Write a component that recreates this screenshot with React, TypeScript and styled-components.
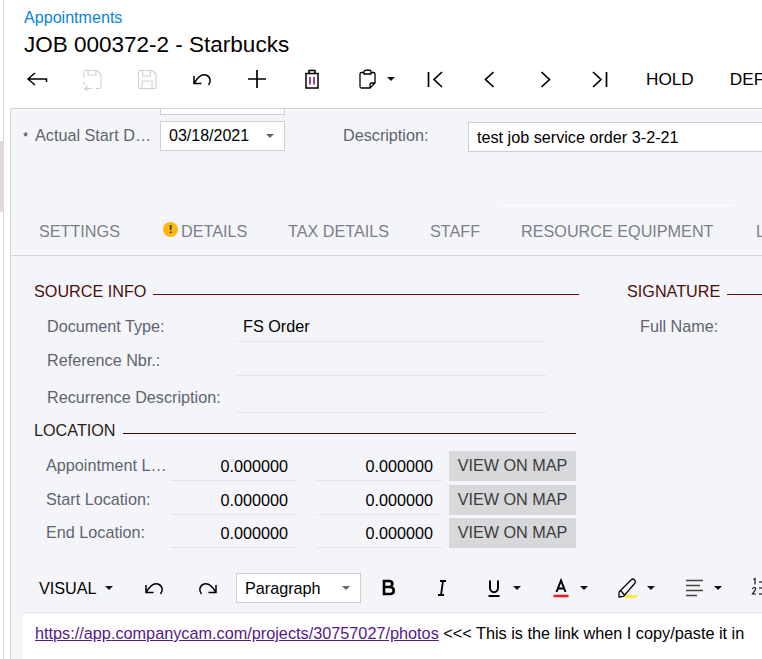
import React from 'react'
import styled, { createGlobalStyle } from 'styled-components'

const GlobalStyle = createGlobalStyle`
  html, body {
    margin: 0;
    padding: 0;
    background: #fff;
    overflow: hidden;
  }
  body {
    font-family: 'Liberation Sans', Arial, sans-serif;
    font-size: 16.2px;
    color: #000;
  }
`

const Page = styled.div`
  display: flex;
  width: 762px;
  height: 659px;
  overflow: hidden;
`
const Rail = styled.div`
  flex: 0 0 3px;
  border-right: 1px solid #d9dadd;
  display: flex;
  flex-direction: column;
`
const RailMark = styled.div`
  margin-top: 141px;
  height: 71px;
  background: #e6d6d8;
`
const Main = styled.div`
  flex: 1;
  min-width: 0;
  display: flex;
  flex-direction: column;
`
const Header = styled.div`
  padding: 8px 0 0 20px;
  height: 108px;
  box-sizing: border-box;
`
const Breadcrumb = styled.div`
  color: #0a84d6;
  font-size: 16.1px;
  line-height: 19px;
`
const Title = styled.div`
  font-size: 22.5px;
  line-height: 27px;
  margin-top: 4px;
`
const Toolbar = styled.div`
  display: flex;
  align-items: center;
  height: 30px;
  margin: 6px 0 0 -15px;
  white-space: nowrap;
`
const ToolButton = styled.div<{ $w?: number; $pl?: number }>`
  flex: 0 0 ${(p) => p.$w ?? 55}px;
  box-sizing: border-box;
  padding-left: ${(p) => p.$pl ?? 0}px;
  display: flex;
  align-items: center;
  justify-content: center;
  gap: 8px;
`
const TextButton = styled.div<{ $ml: number }>`
  margin-left: ${(p) => p.$ml}px;
  font-size: 17.2px;
`
const Caret = styled.span<{ $color?: string }>`
  display: inline-block;
  width: 0;
  height: 0;
  border-left: 4.5px solid transparent;
  border-right: 4.5px solid transparent;
  border-top: 4.5px solid ${(p) => p.$color ?? '#111'};
`
const Panel = styled.div`
  margin-left: 6px;
  flex: 1;
  min-height: 0;
  background: #f4f5f8;
  border-top: 1px solid #d4d5d8;
  border-left: 1px solid #d4d5d8;
  overflow: hidden;
`
const InputStub = styled.div`
  margin-left: 149px;
  width: 123px;
  height: 5px;
  background: #fff;
  border: 1px solid #ccced2;
  border-top: 0;
`
const TopRow = styled.div`
  display: flex;
  align-items: flex-start;
  height: 84px;
  margin-top: 6px;
`
const Label = styled.div<{ $w?: number; $pl?: number }>`
  color: #5f6470;
  font-size: 16.2px;
  white-space: nowrap;
  box-sizing: border-box;
  ${(p) => (p.$w ? `flex: 0 0 ${p.$w}px;` : '')}
`
const TopLabel = styled(Label)`
  line-height: 28px;
  padding-left: ${(p) => p.$pl ?? 12}px;
`
const Star = styled.span`
  color: #333;
  font-size: 13px;
  margin-right: 7px;
`
const DateBox = styled.div`
  flex: 0 0 125px;
  box-sizing: border-box;
  height: 30px;
  background: #fff;
  border: 1px solid #ccced2;
  display: flex;
  align-items: center;
  justify-content: space-between;
  padding: 0 10px 0 8px;
  font-size: 16px;
`
const TextBox = styled.div`
  flex: 0 0 320px;
  box-sizing: border-box;
  height: 30px;
  margin: 1px 0 0 0;
  background: #fff;
  border: 1px solid #ccced2;
  border-right: 0;
  display: flex;
  align-items: center;
  padding-left: 8px;
  font-size: 16.2px;
`
const Tabs = styled.div`
  display: flex;
  height: 50px;
  border-bottom: 1px solid #d4d5d8;
  white-space: nowrap;
  padding-left: 7px;
`
const Tab = styled.div<{ $w: number; $active?: boolean }>`
  flex: 0 0 ${(p) => p.$w}px;
  margin-bottom: 1px;
  box-sizing: border-box;
  border-top: 1px solid ${(p) => (p.$active ? '#fff' : 'transparent')};
  display: flex;
  align-items: flex-start;
  padding: 15px 0 0 21px;
  color: #7b7f8b;
  font-size: 16.2px;
  line-height: 20px;
`
const WarnDot = styled.span`
  flex: 0 0 15px;
  height: 15px;
  border-radius: 50%;
  margin: 1px 3px 0 -1px;
  background: #ffb70f;
  color: #222;
  font-size: 11px;
  font-weight: 700;
  line-height: 15px;
  text-align: center;
`
const Columns = styled.div`
  display: flex;
  padding: 27px 0 0 23px;
`
const LeftColumn = styled.div`
  flex: 0 0 545px;
`
const RightColumn = styled.div`
  flex: 1;
  margin-left: 48px;
  white-space: nowrap;
`
const SectionHead = styled.div<{ $w?: number; $dark?: boolean; $mt?: number }>`
  display: flex;
  align-items: center;
  gap: 7px;
  box-sizing: border-box;
  height: 18px;
  padding-bottom: 2px;
  margin-top: ${(p) => p.$mt ?? 0}px;
  color: ${(p) => (p.$dark ? '#2c1a1a' : '#4a0f0f')};
  font-size: 16.2px;
  white-space: nowrap;
  ${(p) => (p.$w ? `width: ${p.$w}px;` : '')}
  &::after {
    content: '';
    flex: 1;
    height: 1px;
    margin-top: 6px;
    background: ${(p) => (p.$dark ? '#3c0a0a' : '#700a0a')};
  }
`
const InfoRow = styled.div<{ $h: number }>`
  display: grid;
  grid-template-columns: 189px 309px;
  margin-left: 13px;
  height: ${(p) => p.$h}px;
  align-items: end;
`
const InfoLabel = styled(Label)`
  line-height: 24px;
  padding-bottom: 4px;
`
const InfoValue = styled.div`
  height: 28px;
  line-height: 24px;
  box-sizing: border-box;
  padding-left: 7px;
  border-bottom: 1px dotted #d3d4d8;
  font-size: 16.2px;
`
const LocationRow = styled.div<{ $h: number }>`
  display: flex;
  align-items: flex-end;
  margin-left: 12px;
  height: ${(p) => p.$h}px;
`
const LocLabel = styled(Label)`
  flex: 0 0 125px;
  line-height: 22px;
  padding-bottom: 5px;
  white-space: nowrap;
`
const NumField = styled.div`
  flex: 0 0 125px;
  box-sizing: border-box;
  height: 29px;
  margin-right: 20px;
  padding: 2px 8px 0 0;
  text-align: right;
  line-height: 24px;
  border-bottom: 1px dotted #d3d4d8;
  font-size: 16.2px;
`
const MapButton = styled.div`
  flex: 0 0 127px;
  box-sizing: border-box;
  height: 30px;
  margin-left: -12px;
  background: #d7d8da;
  color: #3c3c3c;
  font-size: 16.2px;
  line-height: 29px;
  text-align: center;
  align-self: flex-end;
  white-space: nowrap;
`
const EditorBar = styled.div`
  display: flex;
  align-items: center;
  height: 48px;
  margin: 16px 0 0 12px;
  white-space: nowrap;
`
const EditorItem = styled.div<{ $w: number }>`
  flex: 0 0 ${(p) => p.$w}px;
  display: flex;
  align-items: center;
  justify-content: center;
  gap: 6.5px;
`
const VisualButton = styled(EditorItem)`
  justify-content: flex-start;
  padding-left: 16px;
  gap: 8px;
  font-size: 16.2px;
  box-sizing: border-box;
`
const ListSlot = styled(EditorItem)`
  justify-content: flex-start;
  margin-left: 15px;
`
const ParagraphSelect = styled.div`
  flex: 0 0 125px;
  box-sizing: border-box;
  height: 30px;
  background: #fff;
  border: 1px solid #ccced2;
  display: flex;
  align-items: center;
  justify-content: space-between;
  padding: 0 10px 0 8px;
  font-size: 16.2px;
`
const Editor = styled.div`
  margin-left: 12px;
  height: 80px;
  background: #fff;
  border-top: 1px solid #e2e3e6;
  padding: 10px 0 0 12px;
  font-size: 16.25px;
  line-height: 20px;
  white-space: nowrap;
`
const VisitedLink = styled.a`
  color: #551a8b;
  text-decoration: underline;
`

const Icon = ({ children, weight = 1.5 }: { children: React.ReactNode; weight?: number }) => (
  <svg width={24} height={24} viewBox="0 0 24 24" fill="none" stroke="currentColor" strokeWidth={weight}>
    {children}
  </svg>
)

const DisabledIcon = styled.span`
  display: flex;
  color: #cfcfcf;
`

const BackIcon = () => (
  <Icon><path d="M21.500 15v-3H3M10 6l-7 6 7 6" /></Icon>
)
const SaveBackIcon = () => (
  <Icon weight={1.1}>
    <path d="M4 11V5a1.500 1.500 0 0 1 1.500-1.500H17l4 4V20a1.500 1.500 0 0 1-1.500 1.500H16M8 3.500V8h8V3.500M4 15v3M12 21.500H5l2.500-2.500M5 21.500L7.500 24" />
  </Icon>
)
const SaveIcon = () => (
  <Icon weight={1.1}>
    <path d="M3.500 5a1.500 1.500 0 0 1 1.500-1.500h12.500L21 7v13a1.500 1.500 0 0 1-1.500 1.500H5A1.500 1.500 0 0 1 3.500 20zM7.500 3.500V9h8V3.500M7 21.500V14h10v7.500" />
  </Icon>
)
const UndoIcon = () => (
  <Icon><path d="M4 9v7.500h7.500M4.500 16C8 9.500 12 7 16 8c4.500 1.500 5.500 6.500 2.500 10" /></Icon>
)
const RedoIcon = () => (
  <Icon><path d="M20 9v7.500h-7.500M19.500 16C16 9.500 12 7 8 8 3.500 9.500 2.500 14.500 5.500 18" /></Icon>
)
const PlusIcon = () => (
  <Icon weight={1.7}><path d="M12 3v18M3 12h18" /></Icon>
)
const DeleteIcon = () => (
  <Icon>
    <path d="M5 6.500h14M9 6.500V3.500h6v3M6 6.500V21h12V6.500" />
    <path d="M10 10v7.500M14 10v7.500" stroke="#7a1060" />
  </Icon>
)
const PasteIcon = () => (
  <Icon weight={1.3}>
    <path d="M9 5.500H6.500A1.500 1.500 0 0 0 5 7v12.500A1.500 1.500 0 0 0 6.500 21H15l5-5V7a1.500 1.500 0 0 0-1.500-1.500H16M9 7V4.500C9 2.500 16 2.500 16 4.500V7zM15 21v-3.500a1.500 1.500 0 0 1 1.500-1.500H20" />
  </Icon>
)
const FirstIcon = () => (
  <Icon weight={1.7}><path d="M5.500 5v15M19 5l-8 7.500 8 7.500" /></Icon>
)
const PrevIcon = () => (
  <Icon weight={1.7}><path d="M15.500 5l-8 7.500 8 7.500" /></Icon>
)
const NextIcon = () => (
  <Icon weight={1.7}><path d="M8.500 5l8 7.500-8 7.500" /></Icon>
)
const LastIcon = () => (
  <Icon weight={1.7}><path d="M18.500 5v15M5 5l8 7.500L5 20" /></Icon>
)
const BoldIcon = () => (
  <Icon weight={2.6}><path d="M7 5h5c4.500 0 4.500 6 0 6H7zM7 11h6c5 0 5 7 0 7H7zM7 4v15" /></Icon>
)
const ItalicIcon = () => (
  <Icon weight={1.8}><path d="M10 5h6M8 19h6M13 5l-2 14" /></Icon>
)
const UnderlineIcon = () => (
  <Icon weight={2}>
    <path d="M8 4.500v7.500c0 5.500 8 5.500 8 0V4.500" />
    <path d="M6.500 20h11" />
  </Icon>
)
const ColorIcon = () => (
  <Icon weight={2}>
    <path d="M7.500 16L12 4.500 16.500 16M9 12.500h6" />
    <path d="M4.500 20h15" stroke="#ee1c25" strokeWidth="2.600" />
  </Icon>
)
const HighlightIcon = () => (
  <Icon weight={1.3}>
    <path d="M8 20.500h13" stroke="#fbe92a" strokeWidth="2.600" />
    <path d="M3 21v-5L15.500 3.500c2-1.500 5 1.500 3.500 3.500L7.500 20.500zM5 15l3.500 4" />
  </Icon>
)
const AlignIcon = () => (
  <Icon>
    <path d="M3 4.500h17M3 9.500h14M3 14.500h17M3 19.500h11" stroke="#444" />
  </Icon>
)
const ListIcon = () => (
  <Icon>
    <path d="M8 6h14M8 12h14M8 18h14" stroke="#444" />
    <path d="M2.500 3.500l1.500-1v6M1.500 13c1-2.500 4-1.500 3 .5L1.500 18h3.500" stroke="#111" strokeWidth="1.200" />
  </Icon>
)

const infoRows = [
  { label: 'Document Type:', value: 'FS Order', h: 41 },
  { label: 'Reference Nbr.:', value: '', h: 34 },
  { label: 'Recurrence Description:', value: '', h: 37 },
]
const locationRows = [
  { label: 'Appointment L…', h: 41 },
  { label: 'Start Location:', h: 34 },
  { label: 'End Location:', h: 33 },
]

export default function App() {
  return (
    <Page>
      <GlobalStyle />
      <Rail>
        <RailMark />
      </Rail>
      <Main>
        <Header>
          <Breadcrumb>Appointments</Breadcrumb>
          <Title>JOB 000372-2 - Starbucks</Title>
          <Toolbar>
            <ToolButton><BackIcon /></ToolButton>
            <ToolButton><DisabledIcon><SaveBackIcon /></DisabledIcon></ToolButton>
            <ToolButton><DisabledIcon><SaveIcon /></DisabledIcon></ToolButton>
            <ToolButton><UndoIcon /></ToolButton>
            <ToolButton><PlusIcon /></ToolButton>
            <ToolButton><DeleteIcon /></ToolButton>
            <ToolButton $w={68} $pl={4}><PasteIcon /><Caret /></ToolButton>
            <ToolButton><FirstIcon /></ToolButton>
            <ToolButton><PrevIcon /></ToolButton>
            <ToolButton><NextIcon /></ToolButton>
            <ToolButton><LastIcon /></ToolButton>
            <TextButton $ml={19}>HOLD</TextButton>
            <TextButton $ml={36}>DEFER</TextButton>
          </Toolbar>
        </Header>
        <Panel>
          <InputStub />
          <TopRow>
            <TopLabel $w={149}><Star>*</Star>Actual Start D…</TopLabel>
            <DateBox>03/18/2021<Caret $color="#666" /></DateBox>
            <TopLabel $w={183} $pl={58}>Description:</TopLabel>
            <TextBox>test job service order 3-2-21</TextBox>
          </TopRow>
          <Tabs>
            <Tab $w={125}>SETTINGS</Tab>
            <Tab $w={124}><WarnDot>!</WarnDot>DETAILS</Tab>
            <Tab $w={142}>TAX DETAILS</Tab>
            <Tab $w={91}>STAFF</Tab>
            <Tab $w={235} $active>RESOURCE EQUIPMENT</Tab>
            <Tab $w={60}>LOG</Tab>
          </Tabs>
          <Columns>
            <LeftColumn>
              <SectionHead>SOURCE INFO</SectionHead>
              {infoRows.map((r) => (
                <InfoRow key={r.label} $h={r.h}>
                  <InfoLabel>{r.label}</InfoLabel>
                  <InfoValue>{r.value}</InfoValue>
                </InfoRow>
              ))}
              <SectionHead $w={542} $dark $mt={9}>LOCATION</SectionHead>
              {locationRows.map((r) => (
                <LocationRow key={r.label} $h={r.h}>
                  <LocLabel>{r.label}</LocLabel>
                  <NumField>0.000000</NumField>
                  <NumField>0.000000</NumField>
                  <MapButton>VIEW ON MAP</MapButton>
                </LocationRow>
              ))}
            </LeftColumn>
            <RightColumn>
              <SectionHead>SIGNATURE</SectionHead>
              <InfoRow $h={41}>
                <InfoLabel>Full Name:</InfoLabel>
              </InfoRow>
            </RightColumn>
          </Columns>
          <EditorBar>
            <VisualButton $w={104}>VISUAL<Caret /></VisualButton>
            <EditorItem $w={53}><UndoIcon /></EditorItem>
            <EditorItem $w={56}><RedoIcon /></EditorItem>
            <ParagraphSelect>Paragraph<Caret $color="#666" /></ParagraphSelect>
            <EditorItem $w={55}><BoldIcon /></EditorItem>
            <EditorItem $w={52}><ItalicIcon /></EditorItem>
            <EditorItem $w={67}><UnderlineIcon /><Caret /></EditorItem>
            <EditorItem $w={67}><ColorIcon /><Caret /></EditorItem>
            <EditorItem $w={67}><HighlightIcon /><Caret /></EditorItem>
            <EditorItem $w={67}><AlignIcon /><Caret /></EditorItem>
            <ListSlot $w={24}><ListIcon /></ListSlot>
          </EditorBar>
          <Editor>
            <VisitedLink>https://app.companycam.com/projects/30757027/photos</VisitedLink>
            {' <<< This is the link when I copy/paste it in'}
          </Editor>
        </Panel>
      </Main>
    </Page>
  )
}
